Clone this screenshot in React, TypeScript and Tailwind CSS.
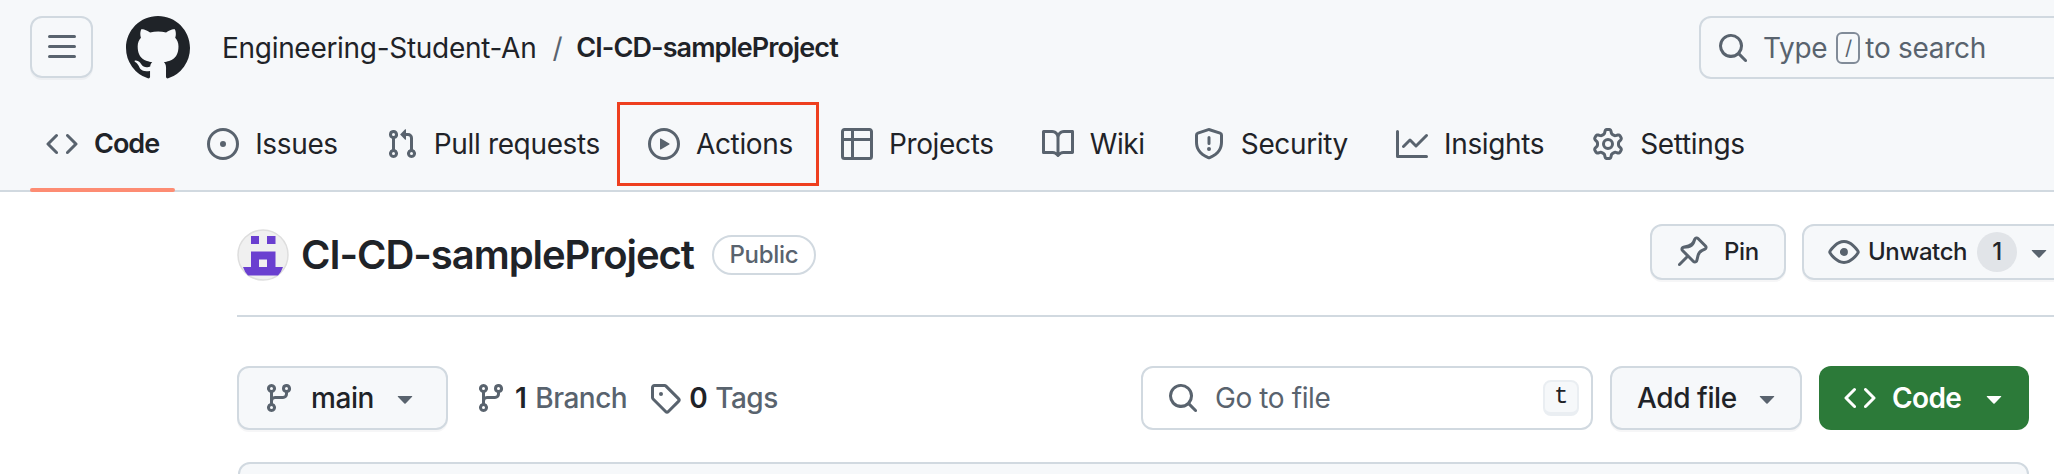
import type { ReactNode } from "react";

// 16px octicons, the stock react-icons ones come out too thin at this scale
const icons = {
  code: "m11.28 3.22 4.25 4.25a.75.75 0 0 1 0 1.06l-4.25 4.25a.749.749 0 0 1-1.275-.326.749.749 0 0 1 .215-.734L13.94 8l-3.72-3.72a.749.749 0 0 1 .326-1.275.749.749 0 0 1 .734.215Zm-6.56 0a.751.751 0 0 1 1.042.018.751.751 0 0 1 .018 1.042L2.06 8l3.72 3.72a.749.749 0 0 1-.326 1.275.749.749 0 0 1-.734-.215L.47 8.53a.75.75 0 0 1 0-1.06Z",
  issue: "M8 9.5a1.5 1.5 0 1 0 0-3 1.5 1.5 0 0 0 0 3ZM8 0a8 8 0 1 1 0 16A8 8 0 0 1 8 0ZM1.5 8a6.5 6.5 0 1 0 13 0 6.5 6.5 0 0 0-13 0Z",
  pull: "M1.5 3.25a2.25 2.25 0 1 1 3 2.122v5.256a2.251 2.251 0 1 1-1.5 0V5.372A2.25 2.25 0 0 1 1.5 3.25Zm5.677-.177L9.573.677A.25.25 0 0 1 10 .854V2.5h1A2.5 2.5 0 0 1 13.5 5v5.628a2.251 2.251 0 1 1-1.5 0V5a1 1 0 0 0-1-1h-1v1.646a.25.25 0 0 1-.427.177L7.177 3.427a.25.25 0 0 1 0-.354ZM3.75 2.5a.75.75 0 1 0 0 1.5.75.75 0 0 0 0-1.5Zm0 9.5a.75.75 0 1 0 0 1.5.75.75 0 0 0 0-1.5Zm8.25.75a.75.75 0 1 0 1.5 0 .75.75 0 0 0-1.5 0Z",
  play: "M8 0a8 8 0 1 1 0 16A8 8 0 0 1 8 0ZM1.5 8a6.5 6.5 0 1 0 13 0 6.5 6.5 0 0 0-13 0Zm4.879-2.773 4.264 2.559a.25.25 0 0 1 0 .428l-4.264 2.559A.25.25 0 0 1 6 10.559V5.442a.25.25 0 0 1 .379-.215Z",
  table: "M0 1.75C0 .784.784 0 1.75 0h12.5C15.216 0 16 .784 16 1.75v12.5A1.75 1.75 0 0 1 14.25 16H1.75A1.75 1.75 0 0 1 0 14.25ZM6.5 6.5v8h7.75a.25.25 0 0 0 .25-.25V6.5Zm8-1.5V1.75a.25.25 0 0 0-.25-.25H6.5V5Zm-13 1.5v7.75c0 .138.112.25.25.25H5v-8ZM5 5V1.5H1.75a.25.25 0 0 0-.25.25V5Z",
  book: "M0 1.75A.75.75 0 0 1 .75 1h4.253c1.227 0 2.317.59 3 1.501A3.743 3.743 0 0 1 11.006 1h4.245a.75.75 0 0 1 .75.75v10.5a.75.75 0 0 1-.75.75h-4.507a2.25 2.25 0 0 0-1.591.659l-.622.621a.75.75 0 0 1-1.06 0l-.622-.621A2.25 2.25 0 0 0 5.258 13H.75a.75.75 0 0 1-.75-.75Zm7.251 10.324.004-5.073-.002-2.253A2.25 2.25 0 0 0 5.003 2.5H1.5v9h3.757a3.75 3.75 0 0 1 1.994.574ZM8.755 4.75l-.004 7.322a3.752 3.752 0 0 1 1.992-.572H14.5v-9h-3.495a2.25 2.25 0 0 0-2.25 2.25Z",
  shield: "M7.467.133a1.748 1.748 0 0 1 1.066 0l5.25 1.68A1.75 1.75 0 0 1 15 3.48V7c0 1.566-.32 3.182-1.303 4.682-.983 1.498-2.585 2.813-5.032 3.855a1.697 1.697 0 0 1-1.33 0c-2.447-1.042-4.049-2.357-5.032-3.855C1.32 10.182 1 8.566 1 7V3.48a1.75 1.75 0 0 1 1.217-1.667Zm.61 1.429a.25.25 0 0 0-.153 0l-5.25 1.68a.25.25 0 0 0-.174.238V7c0 1.358.275 2.666 1.057 3.86.784 1.194 2.121 2.34 4.366 3.297a.196.196 0 0 0 .154 0c2.245-.956 3.582-2.104 4.366-3.298C13.225 9.666 13.5 8.36 13.5 7V3.48a.251.251 0 0 0-.174-.237l-5.25-1.68ZM8.75 4.75v3a.75.75 0 0 1-1.5 0v-3a.75.75 0 0 1 1.5 0ZM9 10.5a1 1 0 1 1-2 0 1 1 0 0 1 2 0Z",
  graph: "M1.5 1.75V13.5h13.75a.75.75 0 0 1 0 1.5H.75a.75.75 0 0 1-.75-.75V1.75a.75.75 0 0 1 1.5 0Zm14.28 2.53-5.25 5.25a.75.75 0 0 1-1.06 0L7 7.06 4.28 9.78a.751.751 0 0 1-1.042-.018.751.751 0 0 1-.018-1.042l3.25-3.25a.75.75 0 0 1 1.06 0L10 7.94l4.72-4.72a.751.751 0 0 1 1.042.018.751.751 0 0 1 .018 1.042Z",
  gear: "M8 0a8.2 8.2 0 0 1 .701.031C9.444.095 9.99.645 10.16 1.29l.288 1.107c.018.066.079.158.212.224.231.114.454.243.668.386.123.082.233.09.299.071l1.103-.303c.644-.176 1.392.021 1.82.63.27.385.506.792.704 1.218.315.675.111 1.422-.364 1.891l-.814.806c-.049.048-.098.147-.088.294.016.257.016.515 0 .772-.01.147.038.246.088.294l.814.806c.475.469.679 1.216.364 1.891a7.977 7.977 0 0 1-.704 1.217c-.428.61-1.176.807-1.82.63l-1.102-.302c-.067-.019-.177-.011-.3.071a5.909 5.909 0 0 1-.668.386c-.133.066-.194.158-.211.224l-.29 1.106c-.168.646-.715 1.196-1.458 1.26a8.006 8.006 0 0 1-1.402 0c-.743-.064-1.289-.614-1.458-1.26l-.289-1.106c-.018-.066-.079-.158-.212-.224a5.738 5.738 0 0 1-.668-.386c-.123-.082-.233-.09-.299-.071l-1.103.303c-.644.176-1.392-.021-1.82-.63a8.12 8.12 0 0 1-.704-1.218c-.315-.675-.111-1.422.363-1.891l.815-.806c.05-.048.098-.147.088-.294a6.214 6.214 0 0 1 0-.772c.01-.147-.038-.246-.088-.294l-.815-.806C.635 6.045.431 5.298.746 4.623a7.92 7.92 0 0 1 .704-1.217c.428-.61 1.176-.807 1.82-.63l1.102.302c.067.019.177.011.3-.071.214-.143.437-.272.668-.386.133-.066.194-.158.211-.224l.29-1.106C6.009.645 6.556.095 7.299.03 7.53.01 7.764 0 8 0Zm-.571 1.525c-.036.003-.108.036-.137.146l-.289 1.105c-.147.561-.549.967-.998 1.189-.173.086-.34.183-.5.29-.417.278-.97.423-1.529.27l-1.103-.303c-.109-.03-.175.016-.195.045-.22.312-.412.644-.573.99-.014.031-.021.11.059.19l.815.806c.411.406.562.957.53 1.456a4.709 4.709 0 0 0 0 .582c.032.499-.119 1.05-.53 1.456l-.815.806c-.081.08-.073.159-.059.19.162.346.353.677.573.989.02.03.085.076.195.046l1.102-.303c.56-.153 1.113-.008 1.53.27.161.107.328.204.501.29.447.222.85.629.997 1.189l.289 1.105c.029.109.101.143.137.146a6.6 6.6 0 0 0 1.142 0c.036-.003.108-.036.137-.146l.289-1.105c.147-.561.549-.967.998-1.189.173-.086.34-.183.5-.29.417-.278.97-.423 1.529-.27l1.103.303c.109.029.175-.016.195-.045.22-.313.411-.644.573-.99.014-.031.021-.11-.059-.19l-.815-.806c-.411-.406-.562-.957-.53-1.456a4.709 4.709 0 0 0 0-.582c-.032-.499.119-1.05.53-1.456l.815-.806c.081-.08.073-.159.059-.19a6.464 6.464 0 0 0-.573-.989c-.02-.03-.085-.076-.195-.046l-1.102.303c-.56.153-1.113.008-1.53-.27a4.44 4.44 0 0 0-.501-.29c-.447-.222-.85-.629-.997-1.189l-.289-1.105c-.029-.11-.101-.143-.137-.146a6.6 6.6 0 0 0-1.142 0ZM11 8a3 3 0 1 1-6 0 3 3 0 0 1 6 0ZM9.5 8a1.5 1.5 0 1 0-3.001.001A1.5 1.5 0 0 0 9.5 8Z",
  pin: "M4.456.734a1.75 1.75 0 0 1 2.826.504l.613 1.327a3.081 3.081 0 0 0 2.084 1.707l2.454.584c1.332.317 1.8 1.972.832 2.94L11.06 10l3.72 3.72a.748.748 0 0 1-.332 1.265.75.75 0 0 1-.729-.205L10 11.06l-2.204 2.205c-.968.968-2.623.5-2.94-.832l-.584-2.454a3.081 3.081 0 0 0-1.707-2.084l-1.327-.613a1.75 1.75 0 0 1-.504-2.826L4.456.734ZM5.92 1.866a.25.25 0 0 0-.404-.072L1.794 5.516a.25.25 0 0 0 .072.404l1.328.613A4.582 4.582 0 0 1 5.73 9.63l.584 2.454a.25.25 0 0 0 .42.12l5.47-5.47a.25.25 0 0 0-.12-.42L9.63 6.13a4.583 4.583 0 0 1-3.098-2.537L5.92 1.866Z",
  eye: "M8 2c1.981 0 3.671.992 4.933 2.078 1.27 1.091 2.187 2.345 2.637 3.023a1.62 1.62 0 0 1 0 1.798c-.45.678-1.367 1.932-2.637 3.023C11.67 13.008 9.981 14 8 14c-1.981 0-3.671-.992-4.933-2.078C1.797 10.83.88 9.576.43 8.898a1.62 1.62 0 0 1 0-1.798c.45-.677 1.367-1.931 2.637-3.022C4.33 2.992 6.019 2 8 2ZM1.679 7.932a.12.12 0 0 0 0 .136c.411.622 1.241 1.75 2.366 2.717C5.176 11.758 6.527 12.5 8 12.5c1.473 0 2.825-.742 3.955-1.715 1.124-.967 1.954-2.096 2.366-2.717a.12.12 0 0 0 0-.136c-.412-.621-1.242-1.75-2.366-2.717C10.824 4.242 9.473 3.5 8 3.5c-1.473 0-2.825.742-3.955 1.715-1.124.967-1.954 2.096-2.366 2.717ZM8 10a2 2 0 1 1-.001-3.999A2 2 0 0 1 8 10Z",
  branch: "M9.5 3.25a2.25 2.25 0 1 1 3 2.122V6A2.5 2.5 0 0 1 10 8.5H6a1 1 0 0 0-1 1v1.128a2.251 2.251 0 1 1-1.5 0V5.372a2.25 2.25 0 1 1 1.5 0v1.836A2.493 2.493 0 0 1 6 7h4a1 1 0 0 0 1-1v-.628A2.25 2.25 0 0 1 9.5 3.25Zm-6 0a.75.75 0 1 0 1.5 0 .75.75 0 0 0-1.5 0Zm8.25-.75a.75.75 0 1 0 0 1.5.75.75 0 0 0 0-1.5ZM4.25 12a.75.75 0 1 0 0 1.5.75.75 0 0 0 0-1.5Z",
  tag: "M1 7.775V2.75C1 1.784 1.784 1 2.75 1h5.025c.464 0 .91.184 1.238.513l6.25 6.25a1.75 1.75 0 0 1 0 2.474l-5.026 5.026a1.75 1.75 0 0 1-2.474 0l-6.25-6.25A1.752 1.752 0 0 1 1 7.775Zm1.5 0c0 .066.026.13.073.177l6.25 6.25a.25.25 0 0 0 .354 0l5.025-5.025a.25.25 0 0 0 0-.354l-6.25-6.25a.25.25 0 0 0-.177-.073H2.75a.25.25 0 0 0-.25.25ZM6 5a1 1 0 1 1 0 2 1 1 0 0 1 0-2Z",
  search: "M10.68 11.74a6 6 0 0 1-7.922-8.982 6 6 0 0 1 8.982 7.922l3.04 3.04a.749.749 0 0 1-.326 1.275.749.749 0 0 1-.734-.215ZM11.5 7a4.499 4.499 0 1 0-8.997 0A4.499 4.499 0 0 0 11.5 7Z",
  caret: "m4.427 7.427 3.396 3.396a.25.25 0 0 0 .354 0l3.396-3.396A.25.25 0 0 0 11.396 7H4.604a.25.25 0 0 0-.177.427Z",
  bars: "M1 2.75A.75.75 0 0 1 1.75 2h12.5a.75.75 0 0 1 0 1.5H1.75A.75.75 0 0 1 1 2.75Zm0 5A.75.75 0 0 1 1.75 7h12.5a.75.75 0 0 1 0 1.5H1.75A.75.75 0 0 1 1 7.75ZM1.75 12h12.5a.75.75 0 0 1 0 1.5H1.75a.75.75 0 0 1 0-1.5Z",
  github: "M8 0c4.42 0 8 3.58 8 8a8.013 8.013 0 0 1-5.45 7.59c-.4.08-.55-.17-.55-.38 0-.27.01-1.13.01-2.2 0-.75-.25-1.23-.54-1.48 1.78-.2 3.65-.88 3.65-3.95 0-.88-.31-1.59-.82-2.15.08-.2.36-1.02-.08-2.12 0 0-.67-.22-2.2.82-.64-.18-1.32-.27-2-.27-.68 0-1.36.09-2 .27-1.53-1.03-2.2-.82-2.2-.82-.44 1.1-.16 1.92-.08 2.12-.51.56-.82 1.28-.82 2.15 0 3.06 1.86 3.75 3.64 3.95-.23.2-.44.55-.51 1.07-.46.21-1.61.55-2.33-.66-.15-.24-.6-.83-1.23-.82-.67.01-.27.38.01.53.34.19.73.9.82 1.13.16.45.68 1.31 2.69.94 0 .67.01 1.3.01 1.49 0 .21-.15.45-.55.38A7.995 7.995 0 0 1 0 8c0-4.42 3.58-8 8-8Z",
};

type IconName = keyof typeof icons;

const tabs: { label: string; icon: IconName; selected?: boolean; marked?: boolean }[] = [
  { label: "Code", icon: "code", selected: true },
  { label: "Issues", icon: "issue" },
  { label: "Pull requests", icon: "pull" },
  { label: "Actions", icon: "play", marked: true },
  { label: "Projects", icon: "table" },
  { label: "Wiki", icon: "book" },
  { label: "Security", icon: "shield" },
  { label: "Insights", icon: "graph" },
  { label: "Settings", icon: "gear" },
];

function Icon({ name, size = 32, className = "" }: { name: IconName; size?: number; className?: string }) {
  return (
    <svg width={size} height={size} viewBox="0 0 16 16" fill="currentColor" className={`shrink-0 ${className}`}>
      <path d={icons[name]} />
    </svg>
  );
}

function Button({ className, children }: { className: string; children: ReactNode }) {
  return (
    <div
      className={`flex shrink-0 items-center rounded-xl border-2 border-[#d1d9e0] bg-[#f6f8fa] shadow-[0_2px_0_rgba(31,35,40,0.04)] ${className}`}
    >
      {children}
    </div>
  );
}

function Avatar() {
  return (
    <svg width="52" height="52" viewBox="0 0 52 52" className="shrink-0">
      <circle cx="26" cy="26" r="25" fill="#f0f0f0" stroke="#dedede" strokeWidth="1.5" />
      <path
        fill="#6a3fd0"
        d="M14 7h8v8h-8zM30 7h8.500v8H30zM14 22.500h24.500V38H30v-7.500h-8V38h-8zM6 38h40a22 22 0 0 1-5 8.500H11A22 22 0 0 1 6 38z"
      />
    </svg>
  );
}

export default function App() {
  return (
    <div className="h-[474px] w-[2054px] overflow-hidden bg-white font-['Inter',sans-serif] text-[#1f2328]">
      <header className="border-b-2 border-[#d1d9e0] bg-[#f6f8fa]">
        <div className="flex h-[96px] items-start pt-4">
          <div className="ml-[30px] flex h-[62px] w-[63px] items-center justify-center rounded-xl border-2 border-[#d1d9e0] shadow-[0_2px_0_rgba(31,35,40,0.04)]">
            <Icon name="bars" className="text-[#59636e]" />
          </div>
          <Icon name="github" size={64} className="ml-[33px]" />
          <div className="ml-8 flex h-[62px] items-center pt-0.5 text-[28px] tracking-[-0.3px]">
            <span>Engineering-Student-An</span>
            <span className="ml-4 mr-[14px] text-[#59636e]">/</span>
            <span className="text-[27px] font-semibold tracking-[-0.9px]">CI-CD-sampleProject</span>
          </div>
          <div className="ml-auto mr-[-60px] flex h-[63px] w-[415px] shrink-0 items-center rounded-xl border-2 border-[#d1d9e0] pl-4 text-[28px] tracking-[-0.3px] text-[#59636e]">
            <Icon name="search" className="mr-[14px]" />
            <span>Type</span>
            <span className="ml-[9px] mr-[5px] flex h-8 w-6 items-center justify-center rounded-md border-2 border-[#818b98] text-[20px]">
              /
            </span>
            <span>to search</span>
          </div>
        </div>
        <nav className="ml-[30px] flex h-[94px] gap-4">
          {tabs.map((tab) => (
            <div key={tab.label} className="relative flex items-center gap-4 px-4 pt-0.5 text-[28px] tracking-[-0.35px]">
              <Icon name={tab.icon} className="text-[#59636e]" />
              <span className={tab.selected ? "text-[27px] font-semibold tracking-[-1px]" : ""}>{tab.label}</span>
              {tab.selected && (
                <span className="absolute inset-x-0 bottom-[-2px] h-1 rounded-sm bg-[#fd8c73]" />
              )}
              {tab.marked && (
                <span className="absolute bottom-[4px] left-[-15px] right-[-10px] top-[6px] border-[3px] border-[#ee3f1f]" />
              )}
            </div>
          ))}
        </nav>
      </header>

      <main className="pl-[237px]">
        <div className="flex h-[125px] items-start border-b-2 border-[#d1d9e0]">
          <div className="mt-[33px] flex items-center">
            <Avatar />
            <h1 className="ml-3 text-[40px] font-semibold tracking-[-1.05px]">CI-CD-sampleProject</h1>
            <span className="ml-[18px] flex h-10 w-[104px] items-center justify-center rounded-full border-2 border-[#d1d9e0] text-[24px] font-medium tracking-[-0.3px] text-[#59636e]">
              Public
            </span>
          </div>
          <div className="ml-auto mr-[-20px] mt-[32px] flex gap-4">
            <Button className="h-14 w-[136px] pl-6 text-[24px] font-medium tracking-[-0.4px]">
              <Icon name="pin" className="-scale-x-100 text-[#59636e]" />
              <span className="ml-4">Pin</span>
            </Button>
            <Button className="h-14 w-[272px] pl-6 text-[24px] font-medium tracking-[-0.4px]">
              <Icon name="eye" className="text-[#59636e]" />
              <span className="ml-2">Unwatch</span>
              <span className="ml-[10px] flex h-10 w-10 items-center justify-center rounded-full bg-[#e1e4e8]">1</span>
              <Icon name="caret" className="ml-[6px] text-[#59636e]" />
            </Button>
          </div>
        </div>

        <div className="mt-[49px] flex items-center pr-[25px]">
          <Button className="h-16 w-[211px] pl-6 text-[28px] font-medium tracking-[-0.4px]">
            <Icon name="branch" className="text-[#59636e]" />
            <span className="ml-4">main</span>
            <Icon name="caret" className="ml-[15px] text-[#59636e]" />
          </Button>
          <div className="ml-[27px] flex items-center text-[28px] tracking-[-0.5px] text-[#59636e]">
            <Icon name="branch" />
            <span className="ml-2 font-semibold text-[#1f2328]">1</span>
            <span className="ml-[9px] font-medium">Branch</span>
            <Icon name="tag" className="ml-[22px]" />
            <span className="ml-2 font-semibold text-[#1f2328]">0</span>
            <span className="ml-2 font-medium">Tags</span>
          </div>
          <div className="ml-auto flex h-16 w-[452px] items-center rounded-xl border-2 border-[#d1d9e0] pl-6 pr-3 text-[28px] tracking-[-0.4px] text-[#59636e]">
            <Icon name="search" className="mr-[16px]" />
            <span>Go to file</span>
            <span className="ml-auto flex h-9 w-9 items-center justify-center rounded-lg border-2 border-b-4 border-[#eaeef2] bg-[#f6f8fa] font-['Liberation_Mono',monospace] text-[24px] text-[#1f2328]">
              t
            </span>
          </div>
          <Button className="ml-[17px] h-16 w-[192px] pl-[25px] text-[28px] font-medium tracking-[-0.4px]">
            <span>Add file</span>
            <Icon name="caret" className="ml-[14px] text-[#59636e]" />
          </Button>
          <div className="ml-[17px] flex h-16 w-[210px] shrink-0 items-center rounded-xl bg-[#2c7a39] pl-[25px] text-[28px] font-semibold tracking-[-0.6px] text-white">
            <Icon name="code" />
            <span className="ml-4">Code</span>
            <Icon name="caret" className="ml-[17px]" />
          </div>
        </div>

        <div className="ml-px mr-[25px] mt-[32px] h-24 rounded-xl border-2 border-[#d1d9e0] bg-[#f6f8fa]" />
      </main>
    </div>
  );
}
